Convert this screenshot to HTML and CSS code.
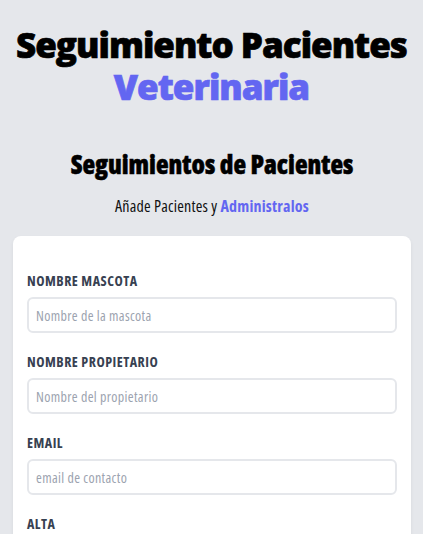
FILE: index.html
```html
<!DOCTYPE html>
<html lang="es">
<head>
<meta charset="utf-8">
<title>Seguimiento Pacientes Veterinaria</title>
<link rel="stylesheet" href="styles.css">
</head>
<body>
<header class="header">
  <h1 class="title"><span class="title-line">Seguimiento Pacientes</span> <span class="title-line accent">Veterinaria</span></h1>
</header>
<main class="main">
  <h2 class="subtitle">Seguimientos de Pacientes</h2>
  <p class="lead">Añade Pacientes y <span class="accent-bold">Administralos</span></p>
  <form class="card">
    <div class="field">
      <label class="label" for="mascota">Nombre Mascota</label>
      <input class="input" id="mascota" type="text" placeholder="Nombre de la mascota">
    </div>
    <div class="field">
      <label class="label" for="propietario">Nombre Propietario</label>
      <input class="input" id="propietario" type="text" placeholder="Nombre del propietario">
    </div>
    <div class="field">
      <label class="label" for="email">Email</label>
      <input class="input" id="email" type="email" placeholder="email de contacto">
    </div>
    <div class="field">
      <label class="label" for="alta">Alta</label>
      <input class="input" id="alta" type="date">
    </div>
  </form>
</main>
</body>
</html>
```
FILE: styles.css
```css
* { box-sizing: border-box; }
html, body { margin: 0; padding: 0; }
body {
  background: #e5e7eb;
  font-family: "Open Sans", "Noto Sans", sans-serif;
  color: #000;
  overflow: hidden;
}
.header { padding-top: 24px; }
.title {
  margin: 0;
  text-align: center;
  font-size: 35px;
  line-height: 42px;
  font-weight: 800;
  font-stretch: 100%;
  letter-spacing: -1px;
  -webkit-text-stroke: 0.7px currentColor;
}
.title-line { display: block; white-space: nowrap; }
.accent { color: #6366f1; }
.main { padding: 40px 12px 0 13px; }
.subtitle {
  margin: 0;
  text-align: center;
  font-size: 26px;
  line-height: 32px;
  font-weight: 800;
  font-stretch: 75%;
  -webkit-text-stroke: 0.5px currentColor;
}
.lead {
  margin: 14px 0 18px;
  text-align: center;
  font-size: 16px;
  line-height: 24px;
  font-stretch: 75%;
  letter-spacing: 0.2px;
  color: #111;
}
.accent-bold { color: #6366f1; font-weight: 700; }
.card {
  background: #fff;
  border-radius: 8px;
  box-shadow: 0 2px 4px rgba(0,0,0,0.06);
  padding: 35px 14px 40px;
}
.field { margin-bottom: 19px; }
.label {
  display: block;
  font-size: 14px;
  line-height: 20px;
  font-weight: 700;
  text-transform: uppercase;
  color: #374151;
  font-stretch: 75%;
  letter-spacing: 0.5px;
}
.input {
  display: block;
  width: 100%;
  height: 36px;
  margin-top: 6px;
  border: 2px solid #e5e7eb;
  border-radius: 6px;
  padding: 0 7px;
  font-family: "Open Sans", "Noto Sans", sans-serif;
  font-size: 14px;
  font-stretch: 75%;
  letter-spacing: 0.35px;
  color: #374151;
  background: #fff;
}
.input::placeholder { color: #9ca3af; }
```
